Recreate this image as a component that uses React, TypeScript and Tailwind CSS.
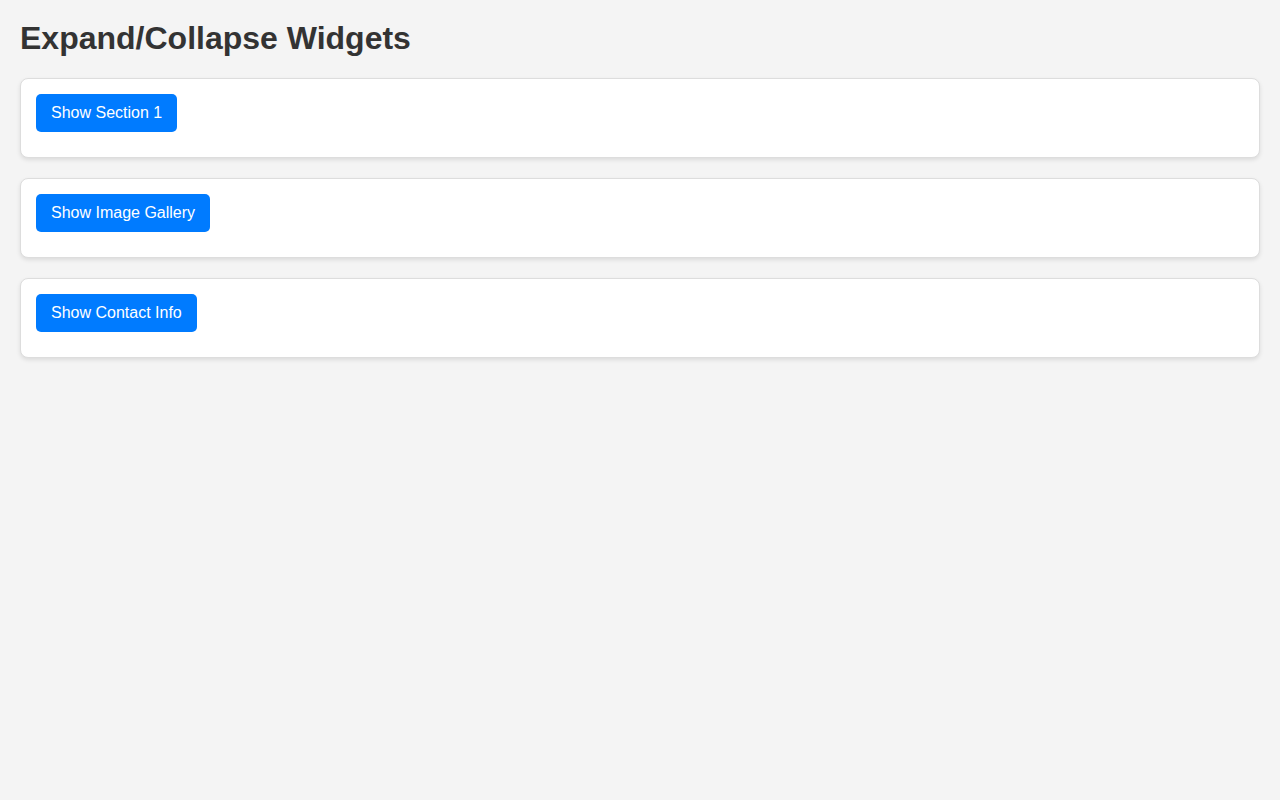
import { useState } from "react";

const widgets = [
    { label: "Section 1", body: "This is the content of section 1." },
    { label: "Image Gallery", body: "Gallery images go here." },
    { label: "Contact Info", body: "Email: contact@example.com" },
];

const Widget = ({ label, body }: { label: string; body: string }) => {
    const [open, setOpen] = useState(false);
    return (
        <div className="bg-white border border-[#ddd] rounded-lg p-[15px] shadow-[0_2px_4px_rgba(0,0,0,0.1)]">
            <button
                onClick={() => setOpen(!open)}
                className="bg-[#007bff] text-white text-base leading-[18px] py-[10px] px-[15px] rounded-[5px] mb-[10px] cursor-pointer">
                {open ? "Hide" : "Show"} {label}
            </button>
            {open && <div className="text-[#333]">{body}</div>}
        </div>
    );
};

export default function App() {
    return (
        <div className="min-h-screen bg-[#f4f4f4] p-5 font-['Liberation_Sans',Arial,sans-serif]">
            <h1 className="text-[32px] leading-[37px] font-bold text-[#333] mb-[21px]">Expand/Collapse Widgets</h1>
            <div className="flex flex-col gap-5">
                {widgets.map((w) => (
                    <Widget key={w.label} label={w.label} body={w.body} />
                ))}
            </div>
        </div>
    );
}
